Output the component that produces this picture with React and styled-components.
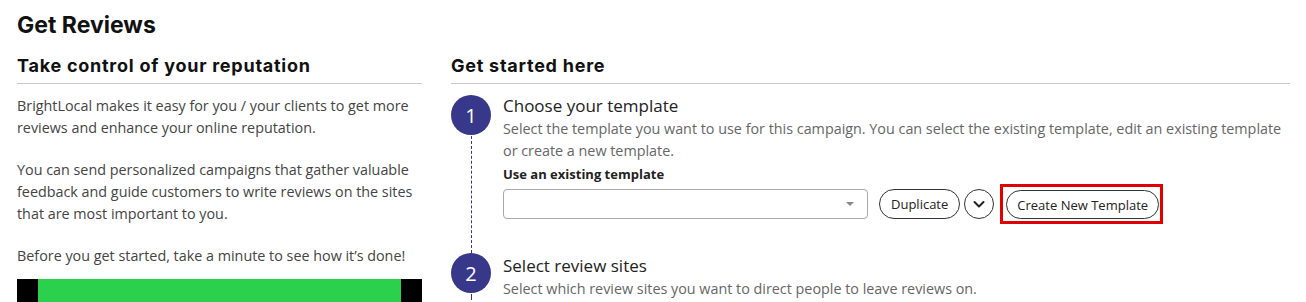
import React from 'react';
import styled, { createGlobalStyle } from 'styled-components';

const Global = createGlobalStyle`
  body {
    margin: 0;
    background: #fff;
    font-family: "Open Sans", "Liberation Sans", sans-serif;
    color: #333;
  }
`;

const Page = styled.div`
  padding: 10px 16px 0 17px;
`;

const PageTitle = styled.h1`
  margin: 0 0 13px;
  font-family: Inter, "Noto Sans", sans-serif;
  font-size: 23px;
  font-weight: 700;
  line-height: 30px;
  color: #111;
`;

const Columns = styled.div`
  display: grid;
  grid-template-columns: 405px 1fr;
  column-gap: 29px;
`;

const SectionTitle = styled.h2`
  margin: 0;
  padding-bottom: 4px;
  border-bottom: 1px solid #c8c8c8;
  font-family: Inter, "Noto Sans", sans-serif;
  font-size: 18px;
  font-weight: 700;
  letter-spacing: 0.75px;
  line-height: 26px;
  color: #111;
`;

const Intro = styled.div`
  padding-top: 11px;
  font-size: 14.35px;
  line-height: 22px;
  color: #444;

  p {
    margin: 0 0 20px;
  }
`;

const Video = styled.div`
  height: 30px;
  margin-top: -8px;
  background: #2bd14d;
  border-left: 21px solid #000;
  border-right: 21px solid #000;
`;

const Steps = styled.div`
  padding-top: 11px;
`;

const Step = styled.div`
  display: grid;
  grid-template-columns: 40px 1fr;
  column-gap: 12px;
`;

const Rail = styled.div`
  display: flex;
  flex-direction: column;
  align-items: center;

  &::after {
    content: '';
    flex: 1;
    border-left: 1px dashed #363784;
    margin-top: 1px;
  }
`;

const Badge = styled.div`
  width: 40px;
  height: 40px;
  border-radius: 50%;
  background: #37388a;
  color: #fff;
  display: flex;
  align-items: center;
  justify-content: center;
  font-size: 20px;
`;

const StepBody = styled.div`
  margin-top: ${p => p.$shift ?? -1}px;
`;

const StepTitle = styled.div`
  font-size: 17px;
  line-height: 24px;
  color: #222;
`;

const StepText = styled.div`
  font-size: 14.35px;
  line-height: 22px;
  color: #666;
`;

const FieldLabel = styled.div`
  margin-top: 2px;
  font-size: 13px;
  font-weight: 700;
  line-height: 20px;
  color: #222;
`;

const Controls = styled.div`
  display: flex;
  align-items: center;
  gap: 4px;
  margin-bottom: 29px;
`;

const Select = styled.div`
  width: 365px;
  height: 30px;
  box-sizing: border-box;
  border: 1px solid #a9a9a9;
  border-radius: 4px;
  display: flex;
  align-items: center;
  justify-content: flex-end;
  padding-right: 13px;
  margin-right: 7px;
`;

const Caret = styled.span`
  width: 0;
  height: 0;
  border-left: 4px solid transparent;
  border-right: 4px solid transparent;
  border-top: 4px solid #888;
`;

const Pill = styled.button`
  height: ${p => p.$h || 30}px;
  box-sizing: border-box;
  border: 1px solid #333;
  border-radius: 15px;
  background: #fff;
  padding: 0 ${p => p.$pad || 11}px;
  font-family: "Open Sans", "Liberation Sans", sans-serif;
  font-size: 13px;
  color: #222;
  display: flex;
  align-items: center;
  justify-content: center;
  ${p => p.$round && 'width: 30px; padding: 0;'}
`;

const Highlight = styled.div`
  border: 3px solid #e00000;
  padding: 3px 1px 2px 3px;
  margin-left: 2px;
  display: flex;
`;

const Chevron = () => (
  <svg width="16" height="16" viewBox="0 0 16 16" fill="none">
    <path d="M3.5 6l4.5 4.5L12.5 6" stroke="#222" strokeWidth="2" strokeLinecap="round" strokeLinejoin="round" />
  </svg>
);

export default function App() {
  return (
    <>
      <Global />
      <Page>
        <PageTitle>Get Reviews</PageTitle>
        <Columns>
          <div>
            <SectionTitle>Take control of your reputation</SectionTitle>
            <Intro>
              <p>BrightLocal makes it easy for you / your clients to get more reviews and enhance your online reputation.</p>
              <p>You can send personalized campaigns that gather valuable feedback and guide customers to write reviews on the sites that are most important to you.</p>
              <p>Before you get started, take a minute to see how it’s done!</p>
            </Intro>
            <Video />
          </div>
          <div>
            <SectionTitle>Get started here</SectionTitle>
            <Steps>
              <Step>
                <Rail><Badge>1</Badge></Rail>
                <StepBody>
                  <StepTitle>Choose your template</StepTitle>
                  <StepText>
                    Select the template you want to use for this campaign. You can select the existing template, edit an existing template or create a new template.
                  </StepText>
                  <FieldLabel>Use an existing template</FieldLabel>
                  <Controls>
                    <Select><Caret /></Select>
                    <Pill>Duplicate</Pill>
                    <Pill $round><Chevron /></Pill>
                    <Highlight>
                      <Pill $pad={10} $h={29}>Create New Template</Pill>
                    </Highlight>
                  </Controls>
                </StepBody>
              </Step>
              <Step>
                <Rail><Badge>2</Badge></Rail>
                <StepBody $shift={1}>
                  <StepTitle>Select review sites</StepTitle>
                  <StepText>Select which review sites you want to direct people to leave reviews on.</StepText>
                </StepBody>
              </Step>
            </Steps>
          </div>
        </Columns>
      </Page>
    </>
  );
}
